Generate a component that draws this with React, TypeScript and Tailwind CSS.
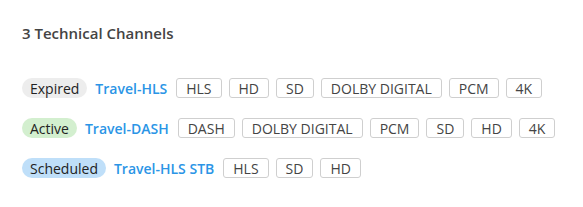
const channels = [
  { status: "Expired", pill: "bg-[#ededed]", name: "Travel-HLS", tags: ["HLS", "HD", "SD", "DOLBY DIGITAL", "PCM", "4K"] },
  { status: "Active", pill: "bg-[#d3efcf]", name: "Travel-DASH", tags: ["DASH", "DOLBY DIGITAL", "PCM", "SD", "HD", "4K"] },
  { status: "Scheduled", pill: "bg-[#bfdff9]", name: "Travel-HLS STB", tags: ["HLS", "SD", "HD"] },
]

export default function App() {
  return (
    <div
      className="w-[583px] h-[207px] bg-white px-[22px] pt-[24px] text-[#3b3b3b]"
      style={{ fontFamily: '"Open Sans", "Noto Sans", sans-serif' }}
    >
      <h2 className="text-[15px] font-semibold leading-[18px] text-[#444]">
        {channels.length} Technical Channels
      </h2>
      <div className="mt-[36px] flex flex-col gap-5">
        {channels.map((c) => (
          <div key={c.name} className="flex items-center h-5">
            <span className={`${c.pill} h-5 rounded-full px-2 flex items-center text-[14px] font-medium text-[#222]`}>
              {c.status}
            </span>
            <span className="ml-2 text-[14px] font-semibold text-[#2b95e6]">{c.name}</span>
            <div className="ml-[9px] flex gap-[7px]">
              {c.tags.map((t, i) => (
                <span
                  key={t + i}
                  className="h-[20px] px-[9px] flex items-center rounded-[3px] border border-[#cfcfcf] text-[14px] text-[#444]"
                >
                  {t}
                </span>
              ))}
            </div>
          </div>
        ))}
      </div>
    </div>
  )
}
